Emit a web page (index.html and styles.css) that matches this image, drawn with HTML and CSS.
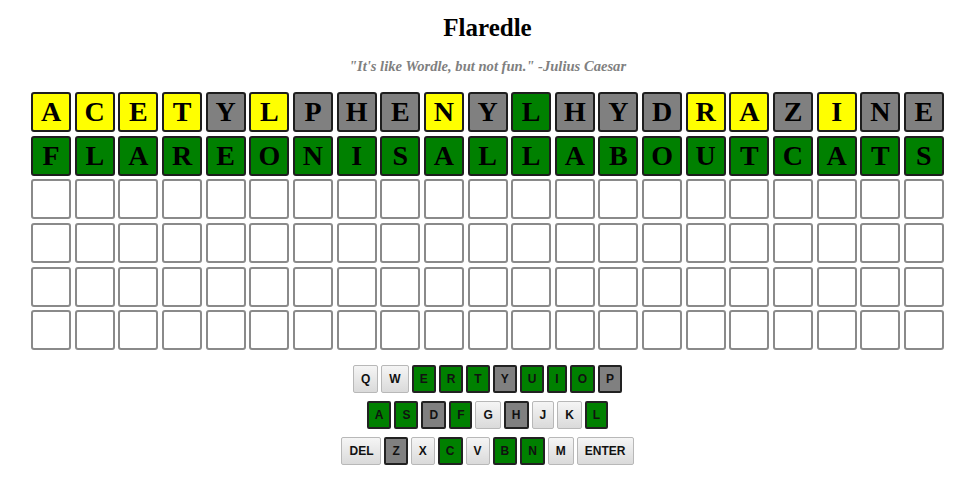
FILE: index.html
```html
<!DOCTYPE html>
<html lang="en">
<head>
    <meta charset="UTF-8">
    <meta name="viewport" content="width=device-width, initial-scale=1.0">
    <title>Flaredle</title>
    <link rel="stylesheet" href="styles.css">
</head>
<body>
    <div id="game">
        <h1>Flaredle</h1>
        <p class="quote">"It's like Wordle, but not fun." -Julius Caesar</p>

        <div class="board">
            <!-- guess 1 -->
            <div class="tile near">A</div>
            <div class="tile near">C</div>
            <div class="tile near">E</div>
            <div class="tile near">T</div>
            <div class="tile miss">Y</div>
            <div class="tile near">L</div>
            <div class="tile miss">P</div>
            <div class="tile miss">H</div>
            <div class="tile miss">E</div>
            <div class="tile near">N</div>
            <div class="tile miss">Y</div>
            <div class="tile hit">L</div>
            <div class="tile miss">H</div>
            <div class="tile miss">Y</div>
            <div class="tile miss">D</div>
            <div class="tile near">R</div>
            <div class="tile near">A</div>
            <div class="tile miss">Z</div>
            <div class="tile near">I</div>
            <div class="tile miss">N</div>
            <div class="tile miss">E</div>
            <!-- guess 2 -->
            <div class="tile hit">F</div>
            <div class="tile hit">L</div>
            <div class="tile hit">A</div>
            <div class="tile hit">R</div>
            <div class="tile hit">E</div>
            <div class="tile hit">O</div>
            <div class="tile hit">N</div>
            <div class="tile hit">I</div>
            <div class="tile hit">S</div>
            <div class="tile hit">A</div>
            <div class="tile hit">L</div>
            <div class="tile hit">L</div>
            <div class="tile hit">A</div>
            <div class="tile hit">B</div>
            <div class="tile hit">O</div>
            <div class="tile hit">U</div>
            <div class="tile hit">T</div>
            <div class="tile hit">C</div>
            <div class="tile hit">A</div>
            <div class="tile hit">T</div>
            <div class="tile hit">S</div>
            <!-- empty rows -->
            <div class="tile"></div><div class="tile"></div><div class="tile"></div><div class="tile"></div><div class="tile"></div><div class="tile"></div><div class="tile"></div>
            <div class="tile"></div><div class="tile"></div><div class="tile"></div><div class="tile"></div><div class="tile"></div><div class="tile"></div><div class="tile"></div>
            <div class="tile"></div><div class="tile"></div><div class="tile"></div><div class="tile"></div><div class="tile"></div><div class="tile"></div><div class="tile"></div>
            <div class="tile"></div><div class="tile"></div><div class="tile"></div><div class="tile"></div><div class="tile"></div><div class="tile"></div><div class="tile"></div>
            <div class="tile"></div><div class="tile"></div><div class="tile"></div><div class="tile"></div><div class="tile"></div><div class="tile"></div><div class="tile"></div>
            <div class="tile"></div><div class="tile"></div><div class="tile"></div><div class="tile"></div><div class="tile"></div><div class="tile"></div><div class="tile"></div>
            <div class="tile"></div><div class="tile"></div><div class="tile"></div><div class="tile"></div><div class="tile"></div><div class="tile"></div><div class="tile"></div>
            <div class="tile"></div><div class="tile"></div><div class="tile"></div><div class="tile"></div><div class="tile"></div><div class="tile"></div><div class="tile"></div>
            <div class="tile"></div><div class="tile"></div><div class="tile"></div><div class="tile"></div><div class="tile"></div><div class="tile"></div><div class="tile"></div>
            <div class="tile"></div><div class="tile"></div><div class="tile"></div><div class="tile"></div><div class="tile"></div><div class="tile"></div><div class="tile"></div>
            <div class="tile"></div><div class="tile"></div><div class="tile"></div><div class="tile"></div><div class="tile"></div><div class="tile"></div><div class="tile"></div>
            <div class="tile"></div><div class="tile"></div><div class="tile"></div><div class="tile"></div><div class="tile"></div><div class="tile"></div><div class="tile"></div>
        </div>

        <div class="keyboard">
            <div class="key-row">
                <button class="key">Q</button>
                <button class="key">W</button>
                <button class="key hit">E</button>
                <button class="key hit">R</button>
                <button class="key hit">T</button>
                <button class="key miss">Y</button>
                <button class="key hit">U</button>
                <button class="key hit">I</button>
                <button class="key hit">O</button>
                <button class="key miss">P</button>
            </div>
            <div class="key-row">
                <button class="key hit">A</button>
                <button class="key hit">S</button>
                <button class="key miss">D</button>
                <button class="key hit">F</button>
                <button class="key">G</button>
                <button class="key miss">H</button>
                <button class="key">J</button>
                <button class="key">K</button>
                <button class="key hit">L</button>
            </div>
            <div class="key-row">
                <button class="key">DEL</button>
                <button class="key miss">Z</button>
                <button class="key">X</button>
                <button class="key hit">C</button>
                <button class="key">V</button>
                <button class="key hit">B</button>
                <button class="key hit">N</button>
                <button class="key">M</button>
                <button class="key">ENTER</button>
            </div>
        </div>
    </div>
</body>
</html>
```

FILE: styles.css
```css
body{
    margin: 0;
    padding: 0;
    background: #fff;
    font-family: "Liberation Serif", "Times New Roman", serif;
}
#game{
    display: flex;
    flex-direction: column;
    align-items: center;
}
h1{
    font-size: 25px;
    line-height: 30px;
    margin: 13px 0 0;
    color: #000;
}
.quote{
    font-size: 14.6px;
    line-height: 16px;
    font-style: italic;
    font-weight: bold;
    color: #808080;
    margin: 15px 0 18px;
}
.board{
    display: grid;
    grid-template-columns: repeat(21, 40px);
    grid-auto-rows: 40px;
    gap: 3.65px;
}
.tile{
    box-sizing: border-box;
    border: 2px solid #8a8a8a;
    border-radius: 3px;
    background: #fff;
    display: flex;
    justify-content: center;
    align-items: center;
    font-size: 28px;
    font-weight: bold;
    color: #000;
}
.tile.near{
    background: #ffff00;
    border-color: #1e1e1e;
}
.tile.miss{
    background: #808080;
    border-color: #1e1e1e;
}
.tile.hit{
    background: #008000;
    border-color: #1e1e1e;
}
.keyboard{
    display: flex;
    flex-direction: column;
    align-items: center;
    gap: 8px;
    margin-top: 15px;
}
.key-row{
    display: flex;
    gap: 3px;
}
.key{
    font-family: "Liberation Sans", Arial, sans-serif;
    font-size: 12px;
    font-weight: bold;
    line-height: 14px;
    height: 28px;
    padding: 6px 7px;
    border: 1px solid #b8b8b8;
    border-radius: 2px;
    background: linear-gradient(#f5f5f5, #dadada);
    color: #111;
}
.key.hit{
    background: #008000;
    border: 2px solid #222;
    padding: 5px 6px;
}
.key.miss{
    background: #808080;
    border: 2px solid #222;
    padding: 5px 6px;
}
```
